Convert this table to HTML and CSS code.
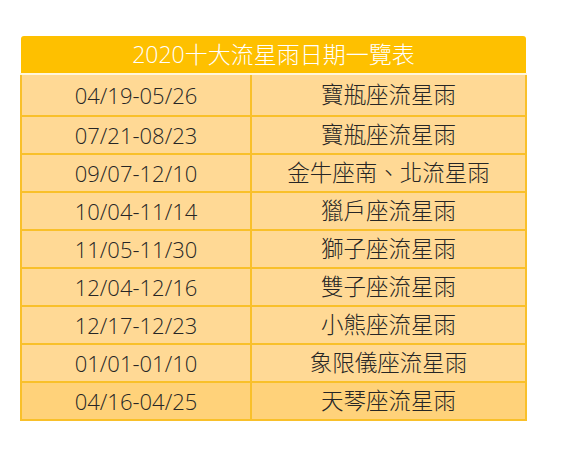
FILE: index.html
```html
<!DOCTYPE html>
<html lang="zh-Hant">
<head>
<meta charset="utf-8">
<link rel="stylesheet" href="styles.css">
</head>
<body>
<div class="wrap">
<table class="meteor">
  <thead>
    <tr><th colspan="2">2020十大流星雨日期一覽表</th></tr>
  </thead>
  <tbody>
    <tr><td class="d">04/19-05/26</td><td class="n">寶瓶座流星雨</td></tr>
    <tr><td class="d">07/21-08/23</td><td class="n">寶瓶座流星雨</td></tr>
    <tr><td class="d">09/07-12/10</td><td class="n">金牛座南、北流星雨</td></tr>
    <tr><td class="d">10/04-11/14</td><td class="n">獵戶座流星雨</td></tr>
    <tr><td class="d">11/05-11/30</td><td class="n">獅子座流星雨</td></tr>
    <tr><td class="d">12/04-12/16</td><td class="n">雙子座流星雨</td></tr>
    <tr><td class="d">12/17-12/23</td><td class="n">小熊座流星雨</td></tr>
    <tr><td class="d">01/01-01/10</td><td class="n">象限儀座流星雨</td></tr>
    <tr class="last"><td class="d">04/16-04/25</td><td class="n">天琴座流星雨</td></tr>
  </tbody>
</table>
</div>
</body>
</html>
```
FILE: styles.css
```css
html, body {
  margin: 0;
  padding: 0;
  background: #ffffff;
}
.wrap {
  padding: 36px 0 0 20px;
}
.meteor {
  width: 507px;
  border-collapse: collapse;
  font-family: "Open Sans", "Noto Sans CJK TC", sans-serif;
  font-size: 22px;
  font-weight: 300;
  color: #262626;
}
.meteor th {
  background: #fec000;
  color: #ffffff;
  font-weight: 300;
  font-size: 23px;
  height: 37px;
  padding: 0;
  border-bottom: 2px solid #fff6de;
  border-radius: 3px 3px 0 0;
  line-height: 37px;
}
.meteor td {
  background: #ffd995;
  border: 2px solid #f9c02a;
  height: 36px;
  padding: 0;
  text-align: center;
  line-height: 36px;
}
.meteor tbody tr:first-child td {
  height: 40px;
  border-top: none;
}
.meteor td.d {
  width: 228px;
}
.meteor td.n {
  font-size: 22.5px;
}
.meteor tr.last td {
  background: #ffd27a;
}
```
